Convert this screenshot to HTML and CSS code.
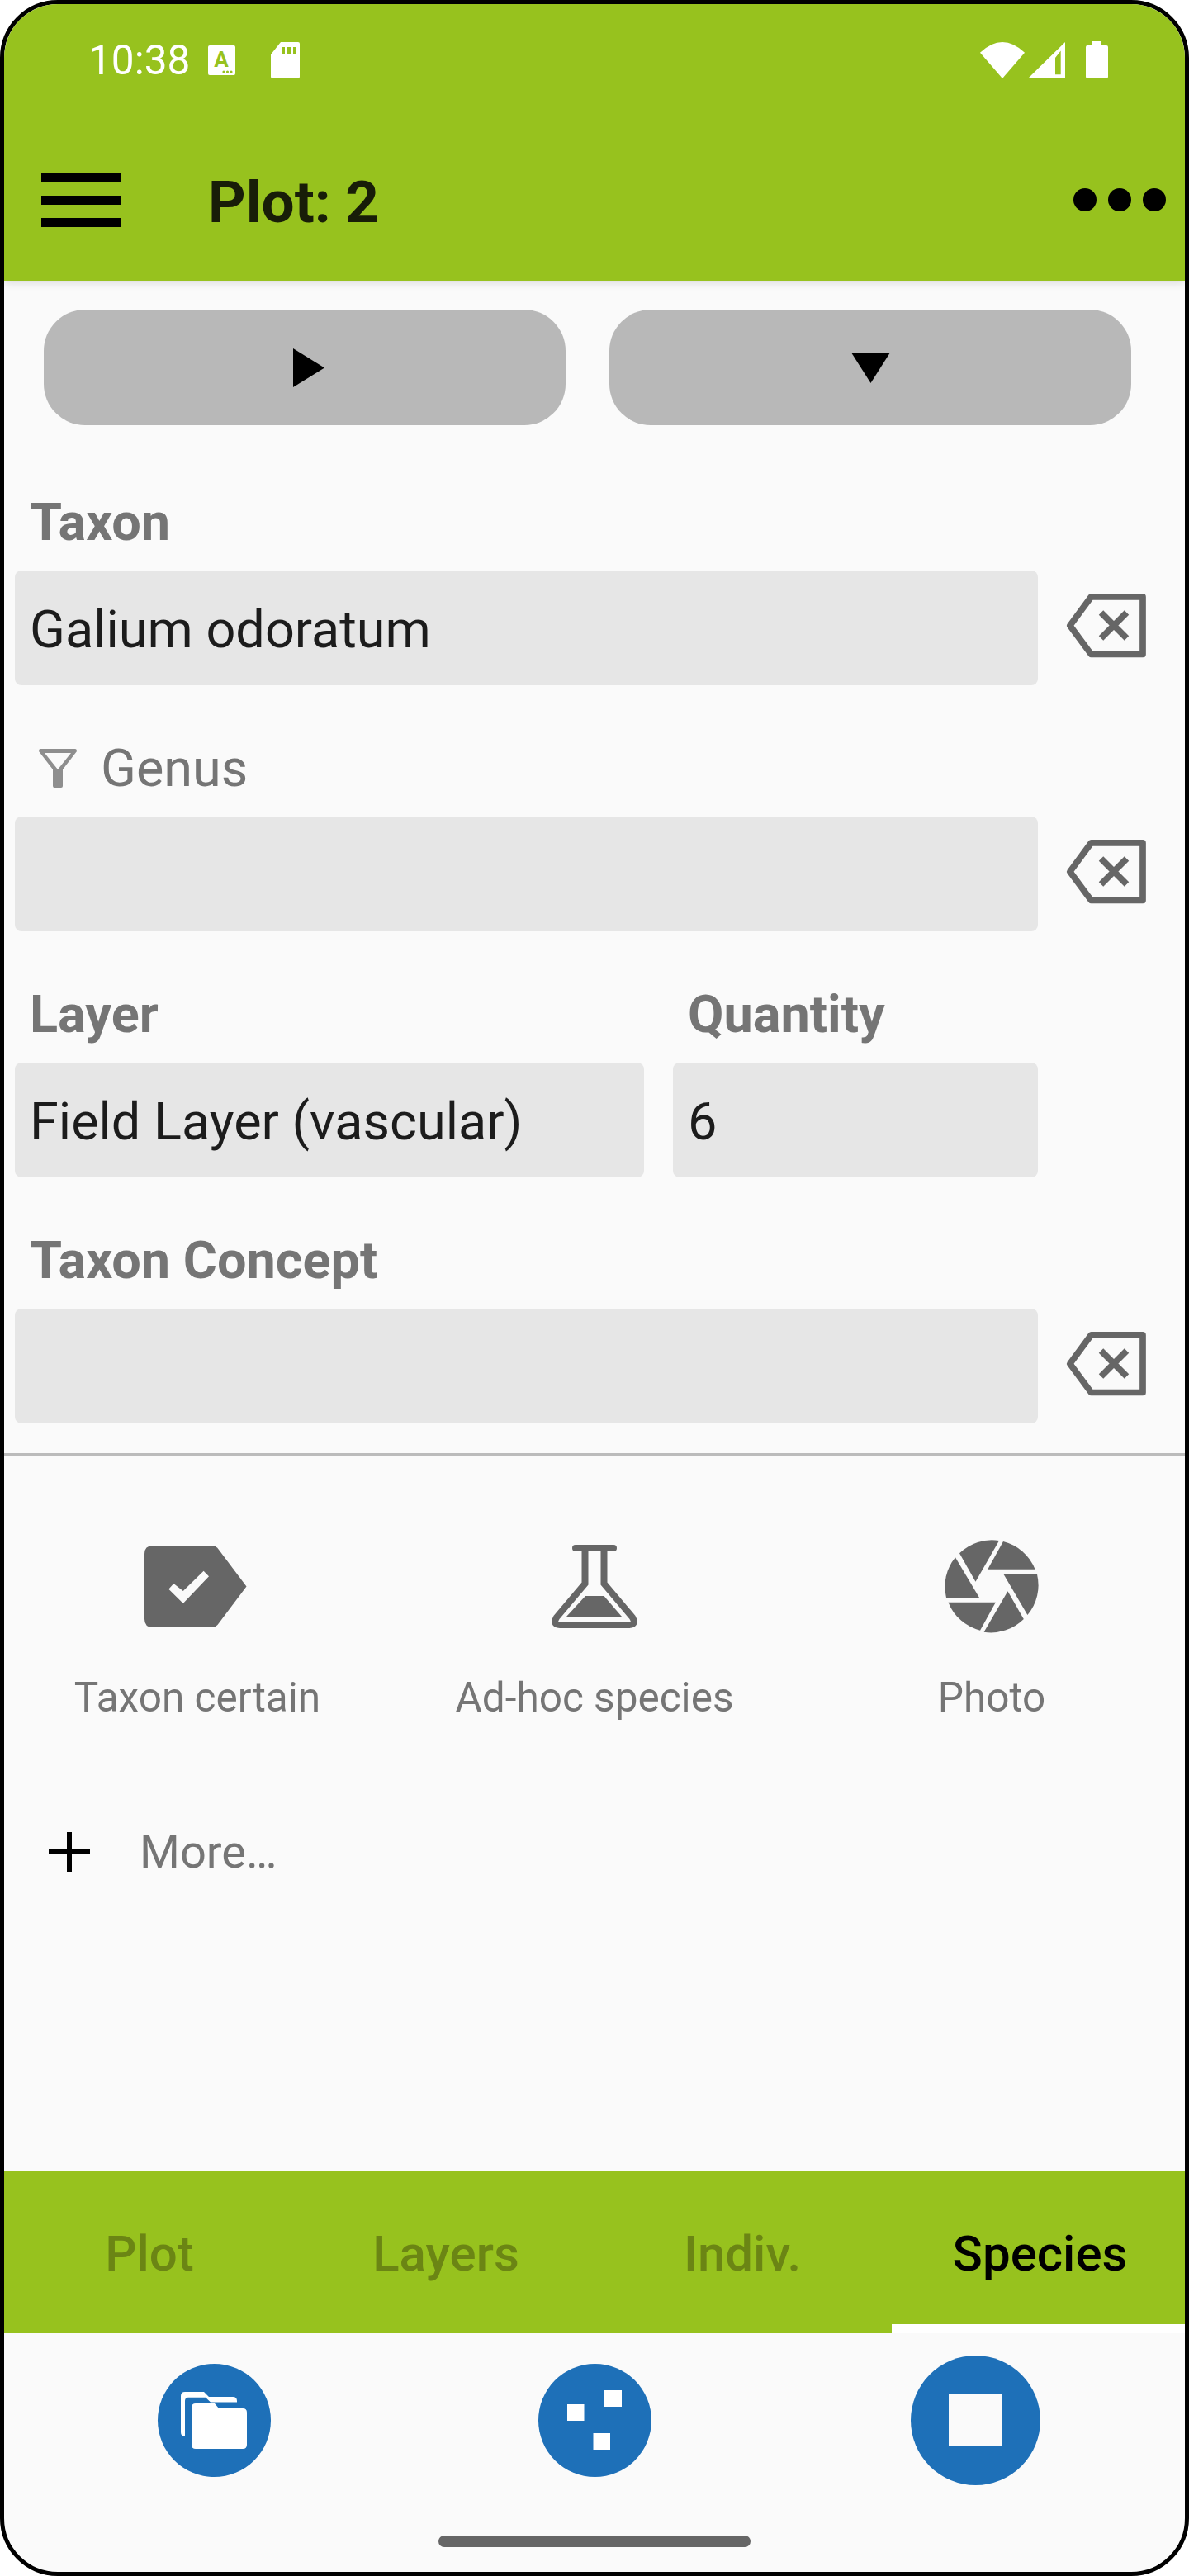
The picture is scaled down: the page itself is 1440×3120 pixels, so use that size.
FILE: index.html
```html
<!DOCTYPE html>
<html>
<head>
    <meta charset="utf-8">
    <title>Plot: 2</title>
    <link rel="stylesheet" href="styles.css">
</head>
<body>
    <div class="phone">
        <div class="camera"></div>

        <header class="top">
            <div class="status">
                <div class="status-left">
                    <span class="clock">10:38</span>
                    <svg class="icon-a" width="33" height="36" viewBox="0 0 33 36">
                        <rect width="33" height="36" rx="2" fill="#fff"/>
                        <text x="16" y="26" text-anchor="middle" class="icon-a-letter">A</text>
                        <circle cx="19" cy="32" r="1.6" class="green"/>
                        <circle cx="23.5" cy="32" r="1.6" class="green"/>
                        <circle cx="28" cy="32" r="1.6" class="green"/>
                    </svg>
                    <svg class="icon-sd" width="35" height="44" viewBox="0 0 35 44">
                        <path d="M12 0H33Q35 0 35 2V42Q35 44 33 44H2Q0 44 0 42V15Z" fill="#fff"/>
                        <path d="M13 6h4v8h-4zM20 6h4v8h-4zM27 6h4v8h-4z" class="green"/>
                    </svg>
                </div>
                <div class="status-right">
                    <svg width="54" height="44" viewBox="0 0 54 44">
                        <path d="M0 12.7Q27 -12.7 54 12.7L27 44Z" fill="#fff"/>
                    </svg>
                    <svg width="44" height="43" viewBox="0 0 44 43">
                        <path fill-rule="evenodd" d="M0 43L44 0V43ZM32 39.3H38.7V10.4L32 19Z" fill="#fff"/>
                    </svg>
                    <svg class="icon-battery" width="27" height="45" viewBox="0 0 27 45">
                        <path d="M8 0H19V5H25Q27 5 27 7V43Q27 45 25 45H2Q0 45 0 43V7Q0 5 2 5H8Z" fill="#fff"/>
                    </svg>
                </div>
            </div>
            <div class="appbar">
                <div class="burger"><span></span><span></span><span></span></div>
                <h1 class="title">Plot: 2</h1>
                <div class="overflow"><span></span><span></span><span></span></div>
            </div>
        </header>

        <main class="main">
            <div class="step-buttons">
                <button class="step">
                    <svg class="play" width="38" height="47" viewBox="0 0 38 47"><path d="M0 0L38 23.5L0 47Z"/></svg>
                </button>
                <button class="step">
                    <svg width="47" height="37" viewBox="0 0 47 37"><path d="M0 0H47L23.5 37Z"/></svg>
                </button>
            </div>

            <section class="group">
                <label class="label">Taxon</label>
                <div class="field-row">
                    <div class="field">Galium odoratum</div>
                    <svg class="clear" width="97" height="78" viewBox="0 0 97 78">
                        <path d="M4.8 38.7L30.5 3.9H93V73.5H30.5Z"/>
                        <path d="M42.5 23L73.5 54M73.5 23L42.5 54"/>
                    </svg>
                </div>
            </section>

            <section class="group">
                <label class="label label-filter">
                    <svg width="46" height="47" viewBox="0 0 46 47">
                        <path fill-rule="evenodd" fill="#8e8e8e" d="M2 0H44Q46 0 46 3L29 25V45Q29 47 27 47H19Q17 47 17 45V25L0 3Q0 0 2 0ZM7 5L23 25L39 5Z"/>
                    </svg>
                    Genus
                </label>
                <div class="field-row">
                    <div class="field"></div>
                    <svg class="clear" width="97" height="78" viewBox="0 0 97 78">
                        <path d="M4.8 38.7L30.5 3.9H93V73.5H30.5Z"/>
                        <path d="M42.5 23L73.5 54M73.5 23L42.5 54"/>
                    </svg>
                </div>
            </section>

            <section class="group group-split">
                <div class="split-layer">
                    <label class="label">Layer</label>
                    <div class="field">Field Layer (vascular)</div>
                </div>
                <div class="split-quantity">
                    <label class="label">Quantity</label>
                    <div class="field">6</div>
                </div>
            </section>

            <section class="group">
                <label class="label">Taxon Concept</label>
                <div class="field-row">
                    <div class="field"></div>
                    <svg class="clear" width="97" height="78" viewBox="0 0 97 78">
                        <path d="M4.8 38.7L30.5 3.9H93V73.5H30.5Z"/>
                        <path d="M42.5 23L73.5 54M73.5 23L42.5 54"/>
                    </svg>
                </div>
            </section>

            <hr class="divider">

            <div class="actions">
                <div class="action">
                    <div class="action-icon">
                        <svg class="tag" width="124" height="99" viewBox="0 0 124 99">
                            <path fill="#666" d="M10 0H81Q87 0 90 5L123.5 49.5L90 94Q87 99 81 99H10Q0 99 0 89V10Q0 0 10 0Z"/>
                            <path fill="#fafafa" d="M29.3 52.7L35.3 46L46.8 55L71.6 30.7L78 37.3L46.8 70Z"/>
                        </svg>
                    </div>
                    <span>Taxon certain</span>
                </div>
                <div class="action">
                    <div class="action-icon">
                        <svg width="104" height="101" viewBox="0 0 104 101">
                            <path d="M29 4H75" stroke="#666" stroke-width="8" stroke-linecap="round" fill="none"/>
                            <path d="M40.5 8V47L6 88Q1 97 10 97H94Q103 97 98 88L63.5 47V8" stroke="#666" stroke-width="8" fill="none"/>
                            <path d="M41 62H63.5L85 87H18Z" fill="#666"/>
                        </svg>
                    </div>
                    <span>Ad-hoc species</span>
                </div>
                <div class="action">
                    <div class="action-icon">
                        <svg width="114" height="114" viewBox="-57 -57 114 114">
                            <g fill="#666">
                                <path d="M-19.5 -5.3L9 -55A56 56 0 0 0 -39 -39.7Z"/>
                                <path d="M-4.8 -20.3L14 -54A56 56 0 0 1 52.6 -20.3Z"/>
                                <path d="M14.5 -14.3H55A56 56 0 0 1 43.4 35Z"/>
                                <path d="M19.5 6.3L38.8 40A56 56 0 0 1 -9.4 55.7Z"/>
                                <path d="M4.8 19.7L-14 53.7A56 56 0 0 1 -52.5 19.7Z"/>
                                <path d="M-15 14H-55A56 56 0 0 1 -44 -34.7Z"/>
                            </g>
                        </svg>
                    </div>
                    <span>Photo</span>
                </div>
            </div>

            <div class="more">
                <svg width="50" height="48" viewBox="0 0 50 48">
                    <path d="M0 24H50M25 0V48" stroke="#000" stroke-width="6"/>
                </svg>
                <span>More…</span>
            </div>
        </main>

        <nav class="tabs">
            <div class="tab">Plot</div>
            <div class="tab">Layers</div>
            <div class="tab tab-indiv">Indiv.</div>
            <div class="tab tab-active">Species</div>
        </nav>

        <footer class="bottom">
            <div class="fabs">
                <button class="fab">
                    <svg width="80" height="69" viewBox="0 0 80 69">
                        <path fill="#fff" d="M5 0H28L34 6H63Q68 6 68 11V54H5Q0 54 0 49V5Q0 0 5 0Z"/>
                        <path fill="#1e70b8" d="M9 6.7H30L36 12.6H80V69H5V11Q5 6.7 9 6.7Z"/>
                        <path fill="#fff" d="M18 14H41L46 20H75Q80 20 80 25V64Q80 69 75 69H18Q13 69 13 64V19Q13 14 18 14Z"/>
                    </svg>
                </button>
                <button class="fab">
                    <svg width="66" height="72" viewBox="0 0 66 72">
                        <path fill="#fff" d="M0 17H20.5V37H0ZM44.5 0H66V20H44.5ZM31.5 52H52V72H31.5Z"/>
                    </svg>
                </button>
                <button class="fab fab-large">
                    <span class="stop"></span>
                </button>
            </div>
            <div class="home-bar"></div>
        </footer>
    </div>
</body>
</html>
```

FILE: styles.css
```css
html, body {
    margin: 0;
    background-color: #fff;
}

body {
    font-family: Roboto, "Liberation Sans", sans-serif;
}

.phone {
    position: relative;
    display: flex;
    flex-direction: column;
    box-sizing: border-box;
    width: 1440px;
    height: 3120px;
    border: 5px solid #000;
    border-radius: 70px;
    overflow: hidden;
    background-color: #fafafa;
}

.camera {
    position: absolute;
    left: 672px;
    top: 24px;
    width: 86px;
    height: 86px;
    border-radius: 50%;
    background-color: #000;
}

.green {
    fill: #97c21e;
}

/* Top bar */
.top {
    position: relative;
    height: 335px;
    background-color: #97c21e;
    box-shadow: 0 3px 10px rgba(0, 0, 0, 0.12);
}

.status {
    display: flex;
    justify-content: space-between;
    align-items: center;
    height: 135px;
    padding: 0 93px 0 102px;
}

.status-left, .status-right {
    display: flex;
    align-items: center;
}

.clock {
    font-size: 49.5px;
    color: #fff;
    line-height: 60px;
}

.icon-a {
    margin-left: 22px;
}

.icon-a-letter {
    font-family: Roboto, sans-serif;
    font-size: 26px;
    font-weight: 700;
    fill: #97c21e;
}

.icon-sd {
    margin-left: 43px;
}

.status-right svg {
    margin-left: 5px;
}

.status-right .icon-battery {
    margin-left: 25px;
}

.appbar {
    display: flex;
    align-items: center;
    height: 200px;
    padding: 4px 23px 0 45px;
    box-sizing: border-box;
}

.burger {
    display: flex;
    flex-direction: column;
    gap: 16px;
    width: 96px;
}

.burger span {
    height: 11px;
    background-color: #000;
}

.title {
    flex: 1;
    margin: 0 0 0 106px;
    padding-top: 5px;
    font-size: 71px;
    font-weight: 700;
    color: #181d08;
}

.overflow {
    display: flex;
    gap: 14px;
}

.overflow span {
    width: 28px;
    height: 28px;
    border-radius: 50%;
    background-color: #000;
}

/* Form */
.main {
    flex: 1;
}

.step-buttons {
    display: flex;
    gap: 53px;
    margin: 35px 0 0 48px;
}

.step {
    display: flex;
    justify-content: center;
    align-items: center;
    width: 632px;
    height: 140px;
    padding: 0;
    border: none;
    border-radius: 50px;
    background-color: #b8b8b8;
}

.play {
    margin-left: 10px;
}

.group {
    margin: 65px 0 0 13px;
}

.step-buttons + .group {
    margin-top: 82px;
}

.label {
    display: flex;
    align-items: center;
    height: 70px;
    margin-bottom: 24px;
    padding-left: 18px;
    font-size: 63px;
    font-weight: 700;
    color: #757575;
}

.label-filter {
    padding-left: 29px;
    gap: 29px;
    font-weight: 400;
}

.field-row {
    display: flex;
    align-items: flex-start;
}

.field {
    box-sizing: border-box;
    width: 1239px;
    height: 139px;
    padding: 2px 0 0 18px;
    border-radius: 8px;
    background-color: #e6e6e6;
    font-size: 63px;
    line-height: 139px;
    color: #1c1c1c;
}

.clear {
    margin: 28px 0 0 34px;
    fill: none;
    stroke: #666;
    stroke-width: 7.7;
    stroke-linejoin: round;
}

.group-split {
    display: flex;
    gap: 35px;
}

.split-layer .field {
    width: 762px;
}

.split-quantity .field {
    width: 442px;
}

.divider {
    height: 4px;
    margin: 36px 0 0;
    border: none;
    background-color: #bbb;
}

/* Icon actions */
.actions {
    display: grid;
    grid-template-columns: repeat(3, 481px);
    justify-content: center;
    margin-top: 97px;
}

.action {
    display: flex;
    flex-direction: column;
    align-items: center;
    font-size: 49.5px;
    line-height: 60px;
    color: #757575;
}

.action-icon {
    display: flex;
    justify-content: center;
    align-items: center;
    height: 120px;
    margin-bottom: 45px;
}

.tag {
    margin-right: 4px;
}

.more {
    display: flex;
    align-items: center;
    gap: 60px;
    margin: 124px 0 0 54px;
    font-size: 56px;
    color: #757575;
}

/* Tabs */
.tabs {
    display: grid;
    grid-template-columns: 352px 366px 357px 1fr;
    height: 196px;
    background-color: #97c21e;
}

.tab {
    display: flex;
    justify-content: center;
    align-items: center;
    padding-top: 3px;
    font-size: 60px;
    font-weight: 500;
    color: #6b8514;
}

.tab-indiv {
    padding-right: 5px;
}

.tab-active {
    color: #000;
    border-bottom: 11px solid #fff;
    padding: 14px 0 0 4px;
}

/* Bottom buttons */
.bottom {
    display: flex;
    flex-direction: column;
    align-items: center;
    height: 289px;
}

.fabs {
    display: grid;
    grid-template-columns: repeat(3, 461px);
    justify-items: center;
    align-items: center;
    height: 210px;
}

.fab {
    display: flex;
    justify-content: center;
    align-items: center;
    width: 137px;
    height: 137px;
    padding: 0;
    border: none;
    border-radius: 50%;
    background-color: #1e70b8;
}

.fab-large {
    width: 157px;
    height: 157px;
}

.stop {
    width: 64px;
    height: 64px;
    background-color: #fafafa;
}

.home-bar {
    width: 378px;
    height: 14px;
    margin-top: 35px;
    border-radius: 7px;
    background-color: #666;
}
```
